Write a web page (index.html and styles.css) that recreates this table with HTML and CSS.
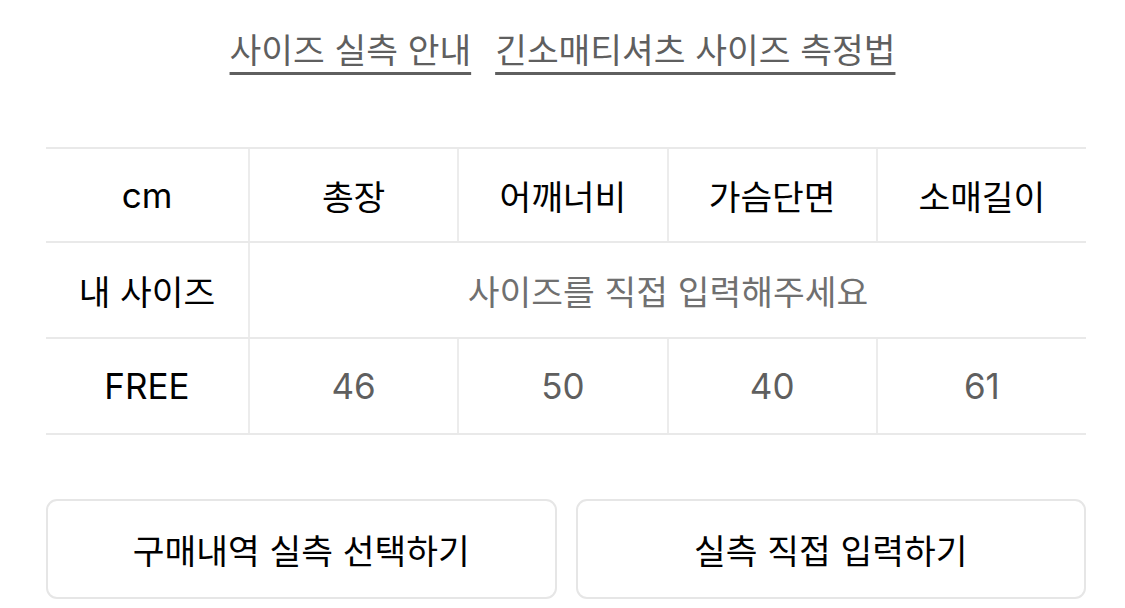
FILE: index.html
```html
<!DOCTYPE html>
<html lang="ko">
<head>
<meta charset="utf-8">
<link rel="stylesheet" href="styles.css">
</head>
<body>
<div class="page">
  <div class="links">
    <a class="link" href="#">사이즈 실측 안내</a>
    <a class="link" href="#">긴소매티셔츠 사이즈 측정법</a>
  </div>
  <table class="size-table">
    <colgroup>
      <col class="c-first"><col><col><col><col>
    </colgroup>
    <tr class="head">
      <td class="latin">cm</td>
      <td>총장</td>
      <td>어깨너비</td>
      <td>가슴단면</td>
      <td>소매길이</td>
    </tr>
    <tr>
      <td>내 사이즈</td>
      <td colspan="4" class="muted">사이즈를 직접 입력해주세요</td>
    </tr>
    <tr>
      <td class="latin">FREE</td>
      <td class="num">46</td>
      <td class="num">50</td>
      <td class="num">40</td>
      <td class="num">61</td>
    </tr>
  </table>
  <div class="buttons">
    <button class="btn">구매내역 실측 선택하기</button>
    <button class="btn">실측 직접 입력하기</button>
  </div>
</div>
</body>
</html>
```
FILE: styles.css
```css
html, body {
  margin: 0;
  padding: 0;
  background: #fff;
}
body {
  font-family: "Inter", "Noto Sans CJK KR", sans-serif;
  color: #111;
}
.page {
  width: 1040px;
  padding-left: 46px;
}
.links {
  display: flex;
  justify-content: center;
  gap: 24px;
  padding-top: 26px;
  height: 147px;
  box-sizing: border-box;
  margin-left: -46px;
  width: 1125px;
}
.link {
  font-size: 34.5px;
  line-height: 50px;
  height: 50px;
  color: #5f5f5f;
  text-decoration: underline;
  text-decoration-thickness: 3px;
  text-underline-offset: 9px;
}
.size-table {
  width: 1040px;
  border-collapse: collapse;
  table-layout: fixed;
}
.c-first {
  width: 203px;
}
.size-table td {
  height: 94px;
  padding: 0;
  text-align: center;
  vertical-align: middle;
  border-top: 2px solid #e9e9e9;
  border-bottom: 2px solid #e9e9e9;
  border-left: 2px solid #ececec;
  font-size: 34.5px;
  font-weight: 400;
  color: #000;
}
.size-table tr.head td {
  height: 92px;
}
.size-table td:first-child {
  border-left: none;
}
.size-table td.latin {
  font-size: 35px;
}
.size-table td.num {
  font-size: 35px;
  color: #5f5f5f;
}
.size-table td.muted {
  color: #707070;
}
.buttons {
  display: flex;
  gap: 19px;
  margin-top: 64px;
}
.btn {
  flex: 1;
  height: 100px;
  background: #fff;
  border: 2px solid #e6e6e6;
  border-radius: 11px;
  font-family: "Inter", "Noto Sans CJK KR", sans-serif;
  font-size: 34.5px;
  font-weight: 400;
  color: #000;
  padding: 0;
}
```
